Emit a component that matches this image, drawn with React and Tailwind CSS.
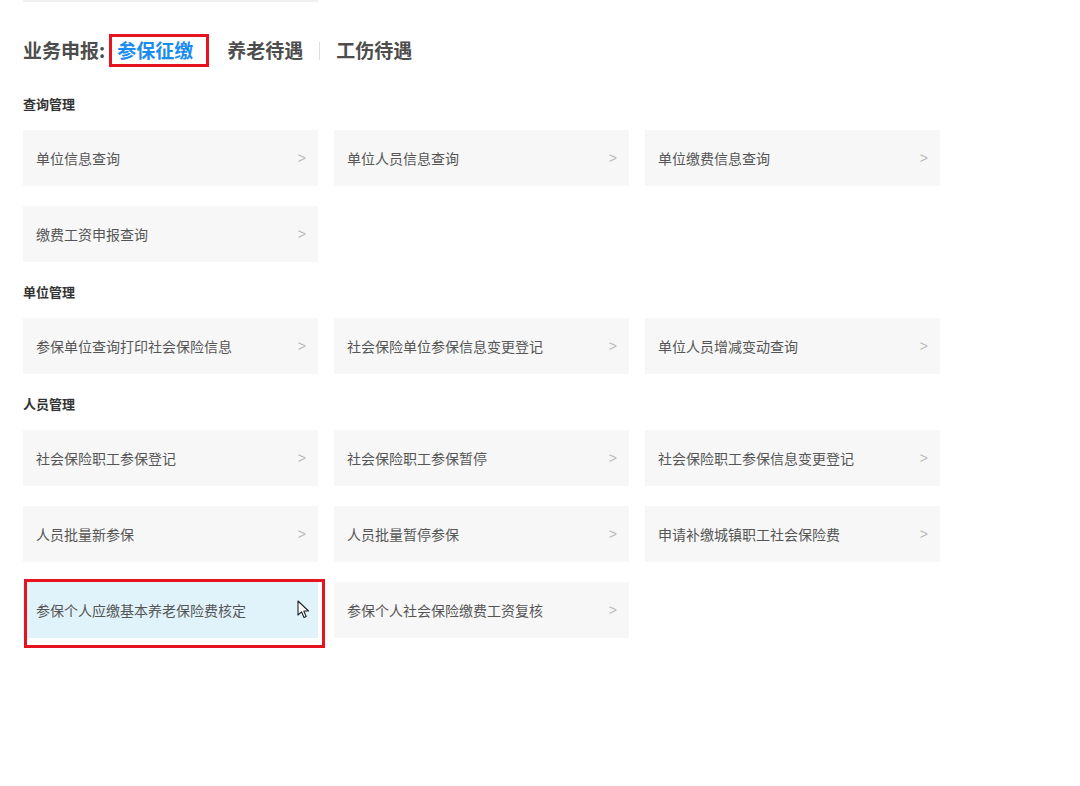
import React from "react";

const sections = [
  {
    title: "查询管理",
    items: ["单位信息查询", "单位人员信息查询", "单位缴费信息查询", "缴费工资申报查询"],
  },
  {
    title: "单位管理",
    items: ["参保单位查询打印社会保险信息", "社会保险单位参保信息变更登记", "单位人员增减变动查询"],
  },
  {
    title: "人员管理",
    items: [
      "社会保险职工参保登记",
      "社会保险职工参保暂停",
      "社会保险职工参保信息变更登记",
      "人员批量新参保",
      "人员批量暂停参保",
      "申请补缴城镇职工社会保险费",
      "参保个人应缴基本养老保险费核定",
      "参保个人社会保险缴费工资复核",
    ],
  },
];

const Cursor = () => (
  <svg width="13" height="19" viewBox="0 0 13 19" className="absolute left-[274px] top-[18px]">
    <path d="M1 1 L1 15 L4.5 11.8 L7 17.5 L9.2 16.5 L6.8 11 L11.5 11 Z" fill="#fff" stroke="#222" strokeWidth="1.1" strokeLinejoin="round" />
  </svg>
);

const Card = ({ label, active }) => (
  <div
    className={`relative h-[56px] flex items-center justify-between pl-[13px] pr-[12px] ${
      active ? "bg-[#e0f3fb]" : "bg-[#f7f7f7]"
    }`}
  >
    <span className="text-[14px] text-[#555]">{label}</span>
    {active ? (
      <Cursor />
    ) : (
      <span className="text-[14px] text-[#bbb] font-['Liberation_Sans',sans-serif]">&gt;</span>
    )}
    {active && (
      <div className="absolute left-[1px] top-[-3px] w-[301px] h-[69px] border-[3px] border-[#e5141f]" />
    )}
  </div>
);

export default function App() {
  return (
    <div className="w-[1080px] h-[786px] bg-white font-['Noto_Sans_CJK_SC','Noto_Sans',sans-serif] overflow-hidden">
      <div className="ml-[23px] w-[295px] h-[2px] bg-[#f0f0f0]" />

      {/* Header */}
      <div className="flex items-center pl-[23px] mt-[32px] h-[33px]">
        <span className="text-[19px] font-bold text-[#4d4d4d]">业务申报:</span>
        <span className="ml-[4px] h-[33px] flex items-center border-[3px] border-[#e5141f] pl-[5px] pr-[13px] text-[19px] font-bold text-[#1a8cf0]">
          参保征缴
        </span>
        <span className="ml-[18px] text-[19px] font-bold text-[#4d4d4d]">养老待遇</span>
        <span className="mx-[16px] w-px h-[18px] bg-[#ddd]" />
        <span className="text-[19px] font-bold text-[#4d4d4d]">工伤待遇</span>
      </div>

      <div className="pl-[23px] mt-[27px]">
        {sections.map((s) => (
          <div key={s.title} className="mb-[20px]">
            <div className="h-[20px] leading-[20px] text-[13px] font-bold text-[#333]">{s.title}</div>
            <div className="mt-[16px] grid grid-cols-[295px_295px_295px] gap-x-[16px] gap-y-[20px]">
              {s.items.map((it) => (
                <Card key={it} label={it} active={it === "参保个人应缴基本养老保险费核定"} />
              ))}
            </div>
          </div>
        ))}
      </div>
    </div>
  );
}
